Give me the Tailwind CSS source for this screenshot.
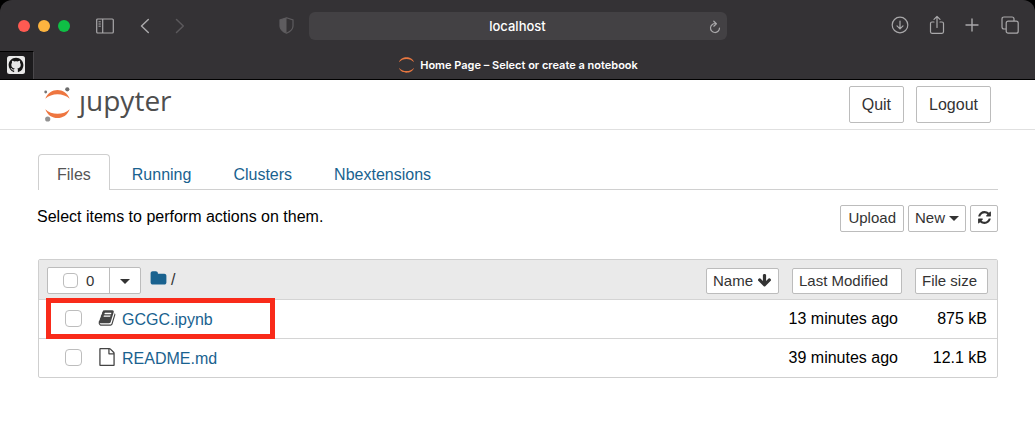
<!DOCTYPE html>
<html lang="en">
<head>
<meta charset="utf-8">
<meta name="viewport" content="width=device-width, initial-scale=1">
<title>Home Page - Select or create a notebook</title>
<script src="https://cdn.jsdelivr.net/npm/@tailwindcss/browser@4"></script>
</head>
<body class="min-h-screen bg-white font-['Liberation_Sans',Arial,sans-serif] text-base text-black">

<!-- Browser window chrome -->
<div class="bg-black font-['Inter',sans-serif]">
  <div class="grid h-[51px] grid-cols-[1fr_418px_1fr] items-center rounded-t-xl bg-[#343235] text-[#a9a8aa]">
    <div class="flex items-center pl-[18px]">
      <div class="flex gap-2">
        <button aria-label="Close" class="size-3 rounded-full bg-[#ff5a52]"></button>
        <button aria-label="Minimize" class="size-3 rounded-full bg-[#fdb43f]"></button>
        <button aria-label="Zoom" class="size-3 rounded-full bg-[#0fbf45]"></button>
      </div>
      <button aria-label="Sidebar" class="ml-[26px]">
        <svg class="h-4 w-[18px]" viewBox="0 0 18 16" fill="none" stroke="currentColor"><rect x=".7" y="1" width="16.6" height="14" rx="1" stroke-width="1.2"/><path d="M6.7 1v14" stroke-width="1.2"/><path d="M2.500 3.800h2.300M2.500 6h2.300M2.500 8.200h2.300"/></svg>
      </button>
      <button aria-label="Back" class="ml-[26px]">
        <svg class="h-4 w-[10px]" viewBox="0 0 10 16" fill="none" stroke="currentColor" stroke-width="1.500" stroke-linecap="round" stroke-linejoin="round"><path d="M8.300 1.500 1.500 8l6.800 6.500"/></svg>
      </button>
      <button aria-label="Forward" class="ml-[25px] text-[#5b595c]">
        <svg class="h-4 w-[10px]" viewBox="0 0 10 16" fill="none" stroke="currentColor" stroke-width="1.500" stroke-linecap="round" stroke-linejoin="round"><path d="M1.500 1.500 8.300 8l-6.800 6.500"/></svg>
      </button>
      <button aria-label="Privacy report" class="mr-[15px] ml-auto text-[#5e5c5f]">
        <svg class="h-[17px] w-[15px]" viewBox="0 0 15 17"><path d="M7.500.8 14 3v6c0 3.500-3 5.700-6.500 7.200C4 14.700 1 12.500 1 9V3Z" fill="none" stroke="currentColor" stroke-width="1.200"/><path d="M7.500.8v15.400C4 14.700 1 12.500 1 9V3Z" fill="currentColor"/></svg>
      </button>
    </div>
    <div class="relative">
      <input aria-label="Address" value="localhost" class="block h-7 w-full rounded-md bg-[#434144] text-center text-[13px] font-medium text-white">
      <button aria-label="Reload" class="absolute top-2 right-1.5">
        <svg class="h-[14px] w-3" viewBox="0 0 12 14" fill="none" stroke="currentColor" stroke-width="1.200" stroke-linecap="round" stroke-linejoin="round"><path d="M6.800 3.600A4.500 4.500 0 1 0 10.500 8M4.800 1.200l2.600 2.500-2.600 2.500"/></svg>
      </button>
    </div>
    <div class="flex items-center justify-end pr-4 pb-0.5">
      <button aria-label="Downloads"><svg class="size-[18px]" viewBox="0 0 18 18" fill="none" stroke="currentColor" stroke-width="1.200" stroke-linecap="round" stroke-linejoin="round"><circle cx="9" cy="9" r="7.800"/><path d="M9 5v7.500M6 9.800l3 3 3-3"/></svg></button>
      <button aria-label="Share" class="ml-5"><svg class="h-5 w-4" viewBox="0 0 16 20" fill="none" stroke="currentColor" stroke-width="1.200" stroke-linecap="round" stroke-linejoin="round"><path d="M5 7H3Q1.500 7 1.500 8.500v8.300q0 1.500 1.500 1.500h10q1.500 0 1.500-1.500V8.500Q14.500 7 13 7h-2M8 12.500V1.500M5 4.300l3-3 3 3"/></svg></button>
      <button aria-label="New tab" class="ml-5"><svg class="size-[14px]" viewBox="0 0 14 14" fill="none" stroke="currentColor" stroke-width="1.400" stroke-linecap="round"><path d="M7 1v12M1 7h12"/></svg></button>
      <button aria-label="Tab overview" class="ml-[22px]"><svg class="size-[18px]" viewBox="0 0 18 18" fill="none" stroke="currentColor" stroke-width="1.200" stroke-linejoin="round"><rect x="5.200" y="5.200" width="12" height="12" rx="2"/><path d="M5 13H3Q1 13 1 11V3Q1 1 3 1h8q2 0 2 2v2"/></svg></button>
    </div>
  </div>
  <div class="flex h-[29px] border-b border-black bg-[#343235]">
    <button aria-label="GitHub" class="flex w-[34px] items-center border-t border-r border-t-black border-r-[#4a484b] bg-[#1c1b1d] pb-px pl-[7px]">
      <svg class="size-[18px]" viewBox="0 0 18 18"><rect width="18" height="18" rx="2.500" fill="#e8e8e8"/><path transform="translate(1.600 1.700) scale(.925)" fill="#161616" d="M8 0C3.580 0 0 3.580 0 8c0 3.540 2.290 6.530 5.470 7.590.4.070.55-.17.55-.38 0-.19-.01-.82-.01-1.490-2.010.37-2.530-.49-2.690-.94-.09-.23-.48-.94-.82-1.130-.28-.15-.68-.52-.01-.53.63-.01 1.080.58 1.230.82.72 1.210 1.870.87 2.330.66.070-.52.28-.87.51-1.070-1.780-.2-3.640-.89-3.640-3.950 0-.87.31-1.590.82-2.150-.08-.2-.36-1.020.08-2.120 0 0 .67-.21 2.200.82.64-.18 1.320-.27 2-.27s1.360.09 2 .27c1.530-1.040 2.200-.82 2.200-.82.44 1.100.16 1.920.08 2.120.51.56.82 1.270.82 2.150 0 3.070-1.870 3.750-3.650 3.950.29.25.54.73.54 1.480 0 1.070-.01 1.930-.01 2.200 0 .21.15.46.55.38A8.010 8.010 0 0 0 16 8c0-4.420-3.580-8-8-8Z"/></svg>
    </button>
    <button class="flex flex-1 items-center justify-center gap-1.5 pr-8 text-[11px] font-semibold text-white">
      <svg class="h-4 w-[15px]" viewBox="0 0 15 16" fill="#e87740"><path d="M0 5.300C1.800-1.300 13.200-1.300 15 5.300 11.500.8 3.500.8 0 5.300ZM0 10.700C1.800 17.300 13.200 17.300 15 10.700 11.500 15.200 3.500 15.200 0 10.700Z"/></svg>
      <span>Home Page – Select or create a notebook</span>
    </button>
  </div>
</div>

<header class="flex h-[50px] items-center justify-between border-b border-[#e0e0e0] pr-11 pl-11">
  <a href="#" aria-label="jupyter" class="flex items-center pb-0.5 text-[#4e4e4e]">
    <svg class="h-9 w-[27px]" viewBox="0 0 27 36"><g fill="#ee7640"><path d="M1.300 12.800C5.500 1 21.500 1 25.700 12.800 19.500 6.800 7.500 6.800 1.300 12.800Z"/><path d="M1.300 23.200C5.500 35 21.500 35 25.700 23.200 19.500 29.200 7.500 29.200 1.300 23.200Z"/></g><circle cx="23.300" cy="3.300" r="2.100" fill="#6d6d6d"/><circle cx="1.700" cy="6" r="1.400" fill="#757575"/><circle cx="3.700" cy="33" r="2.600" fill="#929292"/></svg>
    <span class="ml-2 pb-2 font-['Open_Sans',sans-serif] text-[28px] leading-9">ȷupyter</span>
  </a>
  <div class="flex gap-3">
    <button class="h-[37px] rounded-xs border border-[#bcbcbc] px-3 text-[#333]">Quit</button>
    <button class="h-[37px] rounded-xs border border-[#bcbcbc] px-3 text-[#333]">Logout</button>
  </div>
</header>

<main class="px-[37px] pt-6">
  <nav class="ml-px flex h-9 border-b border-[#d0d0d0] text-[#19628f]">
    <a href="#" class="-mb-px flex items-center rounded-t-sm border border-b-0 border-[#cfcfcf] bg-white px-[18px] pt-1 text-[#555]">Files</a>
    <a href="#" class="flex items-center px-[22px] pt-1.5">Running</a>
    <a href="#" class="flex items-center px-5 pt-1.5">Clusters</a>
    <a href="#" class="flex items-center px-[22px] pt-1.5">Nbextensions</a>
  </nav>

  <div class="flex items-start justify-between pt-[15px]">
    <p>Select items to perform actions on them.</p>
    <div class="flex gap-1 text-[#333]">
      <button class="h-[27px] rounded-xs border border-[#bcbcbc] px-[7px] text-[15px]">Upload</button>
      <button class="flex h-[27px] items-center gap-1 rounded-xs border border-[#bcbcbc] px-1.5 text-[15px]">New
        <svg class="h-[5px] w-[10px]" viewBox="0 0 10 5"><path d="M0 0h10L5 5Z" fill="currentColor"/></svg></button>
      <button aria-label="Refresh" class="flex h-[27px] w-7 items-center justify-center rounded-xs border border-[#bcbcbc] pb-0.5">
        <svg class="size-[15px]" viewBox="0 0 1792 1792" fill="currentColor"><path d="M1639 1056q0 5-1 7-64 268-268 434.500t-478 166.500q-146 0-282.500-55t-243.500-157l-129 129q-19 19-45 19t-45-19-19-45v-448q0-26 19-45t45-19h448q26 0 45 19t19 45-19 45l-137 137q71 66 161 102t187 36q134 0 250-65t186-179q11-17 53-117 8-23 30-23h192q13 0 22.500 9.500t9.500 22.500zm25-800v448q0 26-19 45t-45 19h-448q-26 0-45-19t-19-45 19-45l138-138q-148-137-349-137-134 0-250 65t-186 179q-11 17-53 117-8 23-30 23h-199q-13 0-22.500-9.500t-9.500-22.500v-7q65-268 270-434.500t480-166.500q146 0 284 55.500t245 156.500l130-129q19-19 45-19t45 19 19 45z"/></svg>
      </button>
    </div>
  </div>

  <div class="relative mt-[27px] ml-px rounded-xs border border-[#cfcfcf]">
    <table class="w-full">
      <thead>
        <tr class="h-[39px] bg-[#eaeaea] text-[15px] text-[#333]">
          <th class="p-0 pt-[3px] pl-2 font-normal">
            <div class="flex items-center">
              <div class="flex rounded-xs border border-[#bcbcbc] bg-white">
                <label class="flex h-[25px] w-[62px] items-center gap-2 border-r border-[#bcbcbc] pl-[15px]"><input type="checkbox" aria-label="Select all" class="size-[15px] appearance-none rounded-sm border border-[#bdbdbd] bg-white"><span>0</span></label>
                <button aria-label="Select by type" class="flex w-[30px] items-center justify-center pt-0.5"><svg class="h-[5px] w-[10px]" viewBox="0 0 10 5"><path d="M0 0h10L5 5Z" fill="currentColor"/></svg></button>
              </div>
              <a href="#" aria-label="Home folder" class="ml-[9px] pb-1 text-[#19628f]"><svg class="size-[17px]" viewBox="0 0 1792 1792" fill="currentColor"><path d="M1728 608v704q0 92-66 158t-158 66h-1216q-92 0-158-66t-66-158v-960q0-92 66-158t158-66h320q92 0 158 66t66 158v32h672q92 0 158 66t66 158z"/></svg></a>
              <span class="ml-1 pb-0.5 text-base">/</span>
              <button class="ml-auto flex h-[26px] items-center gap-1 rounded-xs border border-[#bcbcbc] bg-white px-1.5">Name
                <svg class="size-[15px]" viewBox="0 0 1792 1792" fill="currentColor"><path d="M1675 832q0 53-37 90l-651 652q-39 37-91 37-53 0-90-37l-651-652q-38-36-38-90 0-53 38-91l74-75q39-37 91-37 53 0 90 37l294 294v-704q0-52 38-90t90-38h128q52 0 90 38t38 90v704l294-294q37-37 90-37 52 0 91 37l75 75q37 39 37 91z"/></svg></button>
            </div>
          </th>
          <th class="w-[123px] p-0 pt-[3px] pl-[13px] font-normal"><button class="block h-[26px] w-full rounded-xs border border-[#bcbcbc] bg-white px-1.5 text-left">Last Modified</button></th>
          <th class="w-[95px] p-0 pt-[3px] pr-[9px] pl-[13px] font-normal"><button class="block h-[26px] w-full rounded-xs border border-[#bcbcbc] bg-white px-1.5 text-left">File size</button></th>
        </tr>
      </thead>
      <tbody>
        <tr class="h-[39px] border-t border-[#d4d4d4]">
          <td class="p-0 pl-[26px]">
            <div class="flex items-center">
              <input type="checkbox" aria-label="Select GCGC.ipynb" class="size-[17px] appearance-none rounded-sm border border-[#bdbdbd] bg-white">
              <svg class="mb-0.5 ml-4 size-[18px] text-[#444]" viewBox="0 0 1792 1792" fill="currentColor"><path d="M1703 478q40 57 18 129l-275 906q-19 64-76.500 107.500t-122.500 43.500h-923q-77 0-148.500-53.500t-99.500-131.500q-24-67-2-127 0-4 3-27t4-37q1-8-3-21.500t-3-19.500q2-11 8-21t16.500-23.500 16.500-23.500q23-38 45-91.500t30-91.500q3-10 .5-30t-.5-28q3-11 17-28t17-23q21-36 42-92t25-90q1-9-2.500-32t.5-28q4-13 22-30.500t22-22.500q19-26 42.500-84.500t27.500-96.500q1-8-3-25.500t-2-26.500q2-8 9-18t18-23 17-21q8-12 16.500-30.500t15-35 16-36 19.500-32 26.500-23.500 36-11.500 47.500 5.500l-1 3q38-9 51-9h761q74 0 114 56t18 130l-274 906q-36 119-71.500 153.500t-128.500 34.500h-869q-27 0-38 15-11 16-1 43 24 70 144 70h923q29 0 56-15.500t35-41.500l300-987q7-22 5-57 38 15 59 43zm-1064 2q-4 13 2 22.500t20 9.500h608q13 0 25.500-9.500t16.500-22.500l21-64q4-13-2-22.500t-20-9.500h-608q-13 0-25.500 9.500t-16.500 22.500zm-83 256q-4 13 2 22.500t20 9.500h608q13 0 25.500-9.500t16.500-22.500l21-64q4-13-2-22.500t-20-9.500h-608q-13 0-25.500 9.500t-16.500 22.500z"/></svg>
              <a href="#" class="pt-0.5 pl-1.5 text-[#19628f]">GCGC.ipynb</a>
            </div>
          </td>
          <td class="p-0 pr-1 text-right whitespace-nowrap">13 minutes ago</td>
          <td class="p-0 pr-2.5 text-right whitespace-nowrap">875 kB</td>
        </tr>
        <tr class="h-[39px] border-t border-[#d4d4d4]">
          <td class="p-0 pl-[26px]">
            <div class="flex items-center">
              <input type="checkbox" aria-label="Select README.md" class="size-[17px] appearance-none rounded-sm border border-[#bdbdbd] bg-white">
              <svg class="mb-0.5 ml-4 size-[18px] text-[#444]" viewBox="0 0 1792 1792" fill="currentColor"><path d="M1596 380q28 28 48 76t20 88v1152q0 40-28 68t-68 28h-1344q-40 0-68-28t-28-68v-1600q0-40 28-68t68-28h896q40 0 88 20t76 48zm-444-244v376h376q-10-29-22-41l-313-313q-12-12-41-22zm384 1528v-1024h-416q-40 0-68-28t-28-68v-416h-768v1536h1280z"/></svg>
              <a href="#" class="pt-0.5 pl-1.5 text-[#19628f]">README.md</a>
            </div>
          </td>
          <td class="p-0 pr-1 text-right whitespace-nowrap">39 minutes ago</td>
          <td class="p-0 pr-2.5 text-right whitespace-nowrap">12.1 kB</td>
        </tr>
      </tbody>
    </table>
    <!-- Callout around the notebook row -->
    <div class="pointer-events-none absolute top-[38px] left-[7px] h-[41px] w-[229px] border-[5px] border-[#f92b1a]"></div>
  </div>
</main>
</body>
</html>
